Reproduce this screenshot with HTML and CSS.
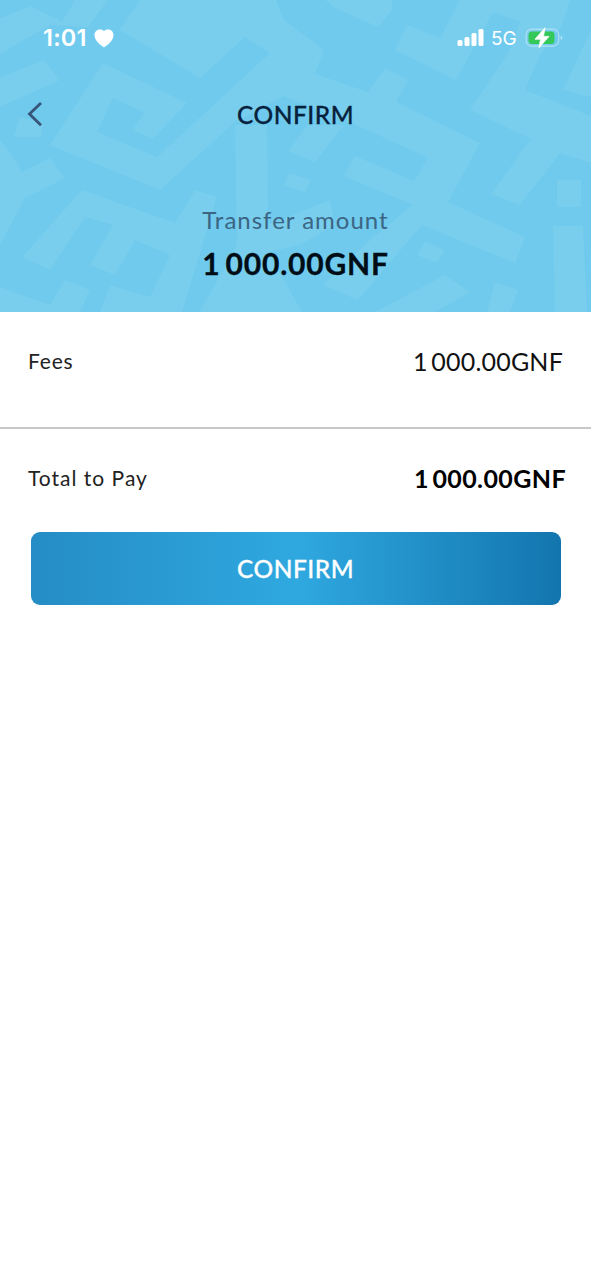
FILE: index.html
```html
<!DOCTYPE html>
<html lang="en">
<head>
<meta charset="utf-8">
<meta name="viewport" content="width=device-width">
<title>Confirm transfer</title>
<link rel="stylesheet" href="styles.css">
</head>
<body>
<main class="screen">
  <header class="hero">
    <svg class="pattern" viewBox="0 0 591 312" aria-hidden="true">
      <path d="M0 54V18L31 6 62 22 75 0H108L88 27 50 25Z"/>
      <path d="M0 78 43 60 60 80 0 107Z"/>
      <path d="M140 0H276L284 20 324 50 315 74 368 92 385 68 408 80 396 102 480 143 448 202 525 237 515 263 422 225 358 300 323 285 370 240 413 205 344 176 355 156 414 181 428 158 350 122 283 96 235 122 160 190 50 145 103 63 187 103 153 139 132 130 145 113 113 98 97 132 157 157 270 53 245 37 200 78 120 30Z"/>
      <path d="M325 0H392V10L378 27 335 8Z"/>
      <path d="M395 50 407 25 440 38 460 0H570L562 25 540 55 525 90 591 116V163L560 153 520 205 491 194 531 139 470 110 510 50 520 22 493 12 456 80Z"/>
      <path d="M591 30 563 90 591 97Z"/>
      <path d="M14 137 20 117 43 123 41 137Z"/>
      <path d="M0 140 12 155 22 172 50 158 65 178 25 198 0 245Z"/>
      <path d="M82 190 175 223 195 190 217 197 182 312H100L110 285 150 297 170 255 135 240 115 275 90 265 113 225 85 217 50 270 22 257Z"/>
      <path d="M0 287 50 305 65 280 90 290 80 312H0Z"/>
      <path d="M235 125H267L268 225 330 200 335 225 300 245 268 252 302 312H200L237 245Z"/>
      <path d="M308 125H344L315 162 288 151Z"/>
      <path d="M289 173 311 180 305 192 284 186Z"/>
      <path d="M425 242 445 250 437 263 417 255Z"/>
      <path d="M375 312 445 275 470 292 435 312Z"/>
      <path d="M495 282 518 290 510 312H487Z"/>
      <path d="M557 180H581V207H557ZM553 226H583L587 312H555Z"/>
    </svg>
    <div class="statusbar">
      <div class="time">
        <span class="clock">1:01</span>
        <svg class="heart" viewBox="0 0 20 19"><path d="M10 18.500C7 16.500.500 12 .500 6.300.500 2.800 2.800.500 5.500.500 7.500.500 9.200.900 10 2.300 10.800.900 12.500.500 14.500.500 17.200.500 19.500 2.800 19.500 6.300 19.500 12 13 16.500 10 18.500Z" fill="#fff"/></svg>
      </div>
      <div class="indicators">
        <svg class="signal" viewBox="0 0 27 18" fill="#fff"><rect x="0.500" y="12" width="5" height="6" rx="1.500"/><rect x="7.500" y="9" width="5" height="9" rx="1.500"/><rect x="14.500" y="5" width="5" height="13" rx="1.500"/><rect x="21.500" y="1" width="5" height="17" rx="1.500"/></svg>
        <span class="network">5G</span>
        <svg class="battery" viewBox="0 0 39 22"><rect x="1.200" y="2.200" width="32.500" height="17" rx="5.500" fill="none" stroke="#a5ddf3" stroke-width="1.400"/><rect x="3.500" y="4.500" width="26" height="12.500" rx="3.500" fill="#34c759"/><path d="M35.700 8.500Q37.500 9.500 37.500 10.700T35.700 13Z" fill="#b2e2f5"/><path d="M20 .8 10 12.200H15.500L14 20.800 24 9.400H18.500Z" fill="#fff" stroke="#fff" stroke-width=".8" stroke-linejoin="round"/></svg>
      </div>
    </div>
    <nav class="navbar">
      <svg class="back" viewBox="0 0 16 26"><path d="M14 2 2.500 13 14 24.200" fill="none" stroke="#365578" stroke-width="2.800"/></svg>
      <h1 class="title">CONFIRM</h1>
    </nav>
    <section class="amount">
      <p class="amount-label">Transfer amount</p>
      <p class="amount-value">1 000.00GNF</p>
    </section>
  </header>
  <section class="row fees">
    <span class="label">Fees</span>
    <span class="value">1 000.00GNF</span>
  </section>
  <section class="row total">
    <span class="label label-total">Total to Pay</span>
    <span class="value value-total">1 000.00GNF</span>
  </section>
  <button class="confirm" type="button">CONFIRM</button>
</main>
</body>
</html>
```
FILE: styles.css
```css
* { box-sizing: border-box; }
body { margin: 0; background: #fff; font-family: Lato, sans-serif; color: #222; }
h1, p { margin: 0; font-weight: inherit; }
svg { display: block; flex: none; }
.screen { width: 591px; min-height: 1280px; }
.hero { position: relative; height: 312px; background: #70caed; overflow: hidden; }
.pattern { position: absolute; inset: 0; width: 591px; height: 312px; fill: #78ceec; }
.statusbar, .navbar, .amount { position: relative; }
.statusbar { display: flex; justify-content: space-between; height: 76px; padding: 0 27px 0 43px; align-items: center; }
.time, .indicators { display: flex; align-items: center; color: #fff; }
.clock { font: 600 23.5px/28px Inter, sans-serif; letter-spacing: .2px; width: 45px; white-space: nowrap; }
.heart { width: 20px; height: 19px; margin-left: 5.5px; }
.signal { width: 27px; height: 18px; margin-top: -2px; }
.network { font: 400 19px/24px Inter, sans-serif; width: 26px; margin: 2px 0 0 7px; white-space: nowrap; }
.battery { width: 39px; height: 22px; margin-left: 8px; }
.navbar { display: grid; grid-template-columns: 70px 1fr 70px; height: 76px; align-items: center; }
.back { width: 16px; height: 26px; margin-left: 27px; }
.title { padding-top: 2px; font-size: 24.5px; line-height: 30px; font-weight: 500; letter-spacing: .5px; text-align: center; color: #07213c; -webkit-text-stroke: .3px #07213c; }
.amount { padding-top: 52px; text-align: center; white-space: nowrap; }
.amount-label { font-size: 24px; line-height: 32px; letter-spacing: 1px; color: #3b6583; }
.amount-value { margin-top: 10px; font-size: 30px; line-height: 34px; font-weight: 700; letter-spacing: .8px; word-spacing: -3px; color: #000d17; -webkit-text-stroke: .3px #000d17; }
.row { display: flex; justify-content: space-between; align-items: center; padding: 0 28px; white-space: nowrap; }
.fees { height: 117px; padding-bottom: 18px; border-bottom: 2px solid #c8c8c8; }
.total { height: 103px; padding-right: 25px; padding-bottom: 6px; }
.label { font-size: 21px; line-height: 28px; letter-spacing: .8px; color: #222; }
.label-total { letter-spacing: 1px; }
.value { font-size: 25px; line-height: 32px; letter-spacing: .2px; word-spacing: -3px; color: #111; }
.value-total { font-weight: 700; letter-spacing: .4px; color: #000; }
.confirm { display: block; width: 530px; height: 73px; margin: 0 0 0 30.5px; padding: 0; border: 0; border-radius: 9px; background: linear-gradient(90deg, #258cc5, #2fa8e0 50%, #1375ae); color: #fff; font: 500 24.5px/30px Lato, sans-serif; letter-spacing: .5px; -webkit-text-stroke: .3px #fff; }
```
